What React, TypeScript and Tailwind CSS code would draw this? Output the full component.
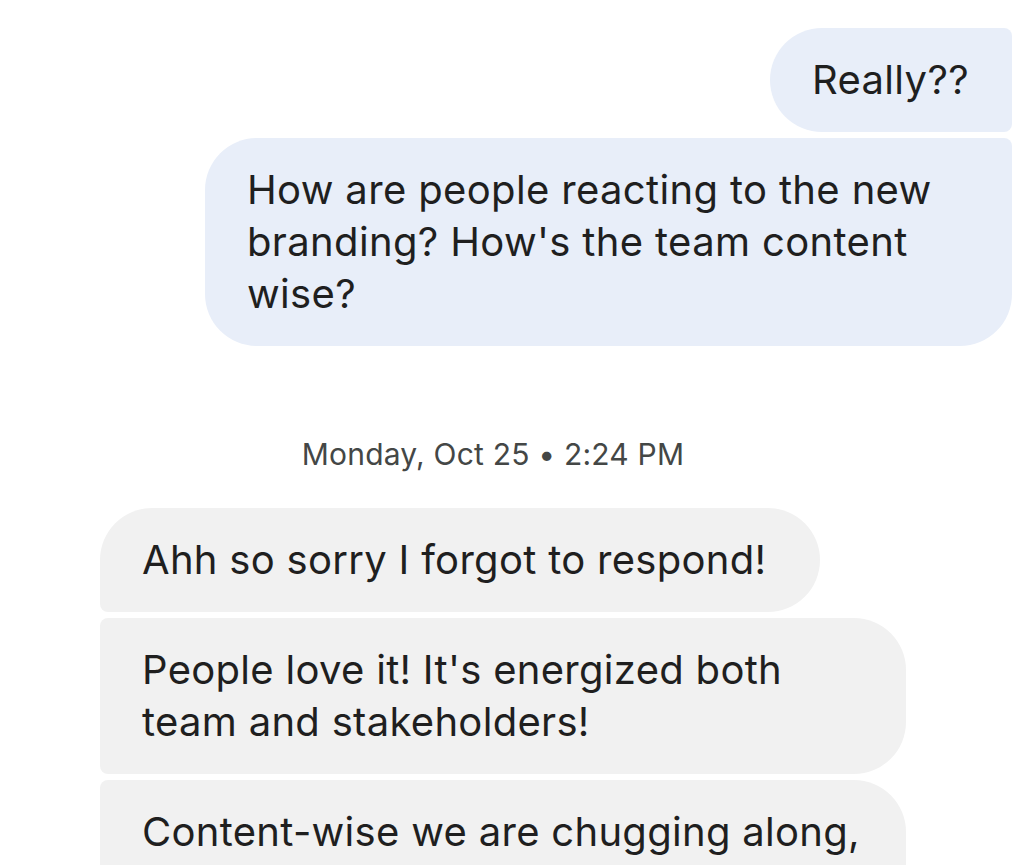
import React from 'react';

type Msg = { text: string; first?: boolean; last?: boolean; short?: boolean };

const outgoing: Msg[] = [
  { text: 'Really??' },
  { text: "How are people reacting to the new branding? How's the team content wise?", last: true },
];

const incoming: Msg[] = [
  { text: 'Ahh so sorry I forgot to respond!', first: true, short: true },
  { text: "People love it! It's energized both team and stakeholders!" },
  { text: 'Content-wise we are chugging along, and the team is doing great.' },
];

function OutBubble({ msg }: { msg: Msg }) {
  return (
    <div
      className={
        'max-w-[807px] bg-[#e8eef9] pl-[42px] pr-[43px] py-[26px] text-[40px] leading-[52px] tracking-[0.35px] text-[#1f1f1f] rounded-l-[52px] rounded-tr-[8px] ' +
        (msg.last ? 'rounded-br-[52px]' : 'rounded-br-[8px]')
      }
    >
      {msg.text}
    </div>
  );
}

function InBubble({ msg }: { msg: Msg }) {
  return (
    <div
      className={
        'max-w-[806px] bg-[#f1f1f1] pl-[42px] py-[26px] text-[40px] leading-[52px] tracking-[0.3px] text-[#1f1f1f] rounded-r-[52px] rounded-bl-[8px] ' +
        (msg.short ? 'pr-[54px] ' : 'pr-[42px] ') +
        (msg.first ? 'rounded-tl-[52px]' : 'rounded-tl-[8px]')
      }
    >
      {msg.text}
    </div>
  );
}

export default function App() {
  return (
    <div
      className="h-[865px] w-[1032px] overflow-hidden bg-white"
      style={{ fontFamily: 'Inter, Roboto, sans-serif' }}
    >
      <div className="flex flex-col items-end gap-[6px] pt-[28px] pr-[20px]">
        {outgoing.map((m, i) => (
          <OutBubble key={i} msg={m} />
        ))}
      </div>
      <div className="flex justify-center pt-[90px] pb-[36px] pl-[100px] pr-[146px]">
        <span className="text-[30px] leading-[36px] tracking-[0.2px] text-[#444746]">Monday, Oct 25 • 2:24 PM</span>
      </div>
      <div className="flex flex-col items-start gap-[6px] pl-[100px]">
        {incoming.map((m, i) => (
          <InBubble key={i} msg={m} />
        ))}
      </div>
    </div>
  );
}
